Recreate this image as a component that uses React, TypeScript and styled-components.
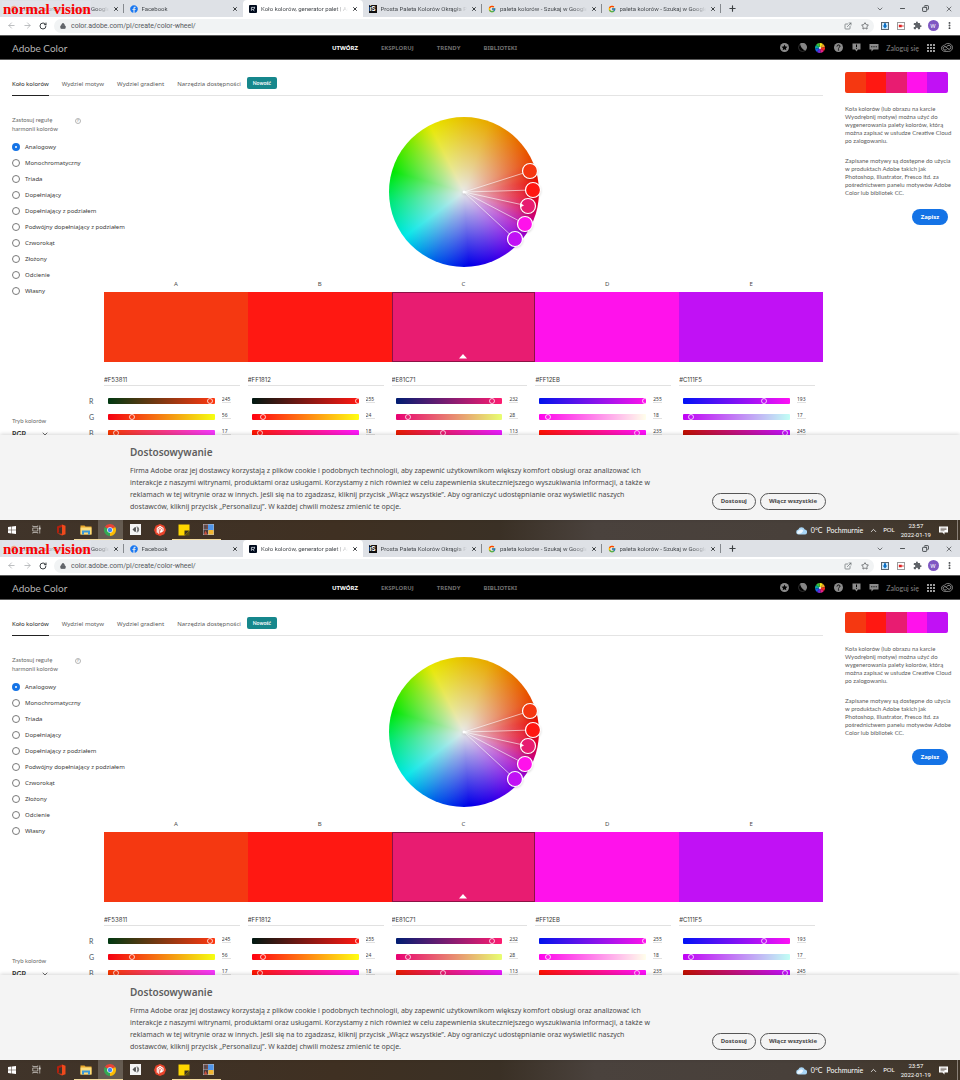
import React, { useState } from 'react';
import styled, { createGlobalStyle, css } from 'styled-components';
import {
  ArrowLeft, ArrowRight, RotateCw, Lock, ExternalLink, Star, MoreVertical, X, Plus, Minus, Copy, ChevronDown, ChevronUp,
} from 'lucide-react';
import { FcGoogle } from 'react-icons/fc';
import { FaFacebook } from 'react-icons/fa';
import { MdExtension } from 'react-icons/md';

const GlobalStyle = createGlobalStyle`
  *, *::before, *::after { box-sizing: border-box; }
  body { margin: 0; background: #fff; }
  button, input, select { font: inherit; color: inherit; margin: 0; padding: 0; border: 0; background: none; }
  ul, p, h1, h2, fieldset, legend { margin: 0; padding: 0; border: 0; }
  ul { list-style: none; }
  a { color: inherit; text-decoration: none; }
`;

const adobe = '"Noto Sans", "Open Sans", sans-serif';
const adobeSmall = 'Lato, "Open Sans", sans-serif';
const system = 'Roboto, "Open Sans", sans-serif';

/* ---------- data ---------- */

type Rgb = [number, number, number];
const palette: { name: string; hex: string; rgb: Rgb }[] = [
  { name: 'A', hex: '#F53811', rgb: [245, 56, 17] },
  { name: 'B', hex: '#FF1812', rgb: [255, 24, 18] },
  { name: 'C', hex: '#E81C71', rgb: [232, 28, 113] },
  { name: 'D', hex: '#FF12EB', rgb: [255, 18, 235] },
  { name: 'E', hex: '#C111F5', rgb: [193, 17, 245] },
];
const channels = ['R', 'G', 'B'];
const rules = [
  'Analogowy', 'Monochromatyczny', 'Triada', 'Dopełniający', 'Dopełniający z podziałem',
  'Podwójny dopełniający z podziałem', 'Czworokąt', 'Złożony', 'Odcienie', 'Własny',
];
const handles = [
  { x: 141, y: 54 }, { x: 144, y: 73 }, { x: 139, y: 89 }, { x: 136, y: 107 }, { x: 126, y: 122 },
];

const rampOf = (rgb: Rgb, channel: number) => {
  const end = (v: number) => `rgb(${rgb.map((c, i) => (i === channel ? v : c)).join(',')})`;
  return `linear-gradient(to right, ${end(0)}, ${end(255)})`;
};

/* ---------- screen and browser frame ---------- */

const Screen = styled.section`
  position: relative;
  display: flex;
  flex-direction: column;
  height: 50vh;
  overflow: hidden;
  font: 6px/8px ${adobe};
  color: #4b4b4b;
`;

const VisionLabel = styled.strong`
  position: absolute;
  top: 1px;
  left: 2px;
  padding-left: 1px;
  font: bold 15px/16px "Liberation Serif", serif;
  color: #fa0000;
  background: rgba(226, 228, 236, 0.6);
`;

const TabStrip = styled.div`
  display: flex;
  height: 17px;
  background: #dee1e6;
  font: 6px/17px ${system};
  color: #45494d;
`;

const TabList = styled.div`
  display: flex;
  flex: 0 1 721px;
  padding-left: 4px;
  min-width: 0;
`;

const BrowserTab = styled.div<{ $active?: boolean; $divider?: boolean }>`
  display: flex;
  flex: 1;
  align-items: center;
  gap: 4px;
  min-width: 0;
  padding: 0 5px 0 6px;
  border-radius: 4px 4px 0 0;
  background: ${(p) => (p.$active ? '#fff' : 'transparent')};
  background-image: ${(p) => (p.$divider ? 'linear-gradient(#85898e, #85898e)' : 'none')};
  background-repeat: no-repeat;
  background-position: right center;
  background-size: 1px 9px;
`;

const TabTitle = styled.span`
  flex: 1;
  min-width: 0;
  overflow: hidden;
  white-space: nowrap;
  mask-image: linear-gradient(to right, #000 85%, transparent);
`;

const IconButton = styled.button<{ $w?: number; $tint?: string }>`
  display: flex;
  flex: none;
  align-items: center;
  justify-content: center;
  width: ${(p) => (p.$w ? `${p.$w}px` : 'auto')};
  color: ${(p) => p.$tint ?? '#3c4043'};
`;

const WindowControls = styled.div`
  display: flex;
  margin-left: auto;
`;

const SiteMark = styled.span`
  flex: none;
  width: 8px;
  height: 8px;
  background: #111;
  color: #fff;
  font: bold 7px/8px ${system};
  text-align: center;
`;

const Toolbar = styled.div`
  display: flex;
  align-items: center;
  height: 19px;
  padding: 0 3px 1px;
  border-bottom: 1px solid #5a5a5a;
  background: #fff;
`;

const Omnibox = styled.label`
  display: flex;
  flex: 1;
  align-items: center;
  gap: 5px;
  height: 14px;
  margin: 0 3px;
  padding-left: 6px;
  border-radius: 7px;
  background: #f1f3f4;
`;

const OmniboxActions = styled.span`
  display: flex;
`;

const Address = styled.input`
  flex: 1;
  min-width: 0;
  font: 7px/14px ${system};
  color: #55595d;
  outline: none;
`;

const Avatar = styled.span`
  width: 11px;
  height: 11px;
  border-radius: 50%;
  background: #7e57c2;
  color: #fff;
  font: 6px/11px ${system};
  text-align: center;
`;

/* ---------- site header ---------- */

const SiteHeader = styled.header`
  display: flex;
  align-items: center;
  height: 24px;
  padding: 0 5px 0 12px;
  border-bottom: 1px solid #5a5a5a;
  background: #000;
  font-family: ${adobeSmall};
`;

const Brand = styled.a`
  flex: 0 0 320px;
  font-size: 10px;
  line-height: 12px;
  color: #b4b4b4;
`;

const Nav = styled.nav`
  display: flex;
  gap: 23px;
`;

const NavLink = styled.a<{ $current?: boolean }>`
  font-size: 6px;
  line-height: 10px;
  font-family: ${adobe};
  font-weight: 700;
  color: ${(p) => (p.$current ? '#fff' : '#6e6e6e')};
`;

const HeaderTools = styled.div`
  display: flex;
  align-items: center;
  margin-left: auto;
`;

const LoginLink = styled.a`
  margin: 0 4px 0 3px;
  font-size: 7px;
  line-height: 10px;
  color: #858585;
`;

/* ---------- page ---------- */

const Viewport = styled.main`
  display: flex;
  flex: 1 1 0;
  gap: 22px;
  min-height: 0;
  padding: 0 12px;
  overflow: hidden;
`;

const Workspace = styled.div`
  flex: 1;
  min-width: 0;
`;

const PageTabs = styled.nav`
  display: flex;
  align-items: flex-end;
  gap: 13px;
  height: 36px;
  border-bottom: 1px solid #e4e4e4;
`;

const PageTab = styled.a<{ $current?: boolean }>`
  height: 24px;
  margin-bottom: -1px;
  border-bottom: 1px solid ${(p) => (p.$current ? '#222' : 'transparent')};
  line-height: 24px;
  white-space: nowrap;
  color: ${(p) => (p.$current ? '#222' : '#5c5c5c')};
`;

const Badge = styled.span`
  margin: 0 0 6px -7px;
  width: 30px;
  border-radius: 2px;
  background: #16878c;
  color: #fff;
  font: bold 5px/12px ${adobeSmall};
  text-align: center;
`;

const Columns = styled.div`
  display: grid;
  grid-template-columns: 92px 1fr;
`;

const Controls = styled.aside`
  display: flex;
  flex-direction: column;
  padding-top: 19px;
`;

const RuleGroup = styled.fieldset`
  min-width: 0;
  white-space: nowrap;
`;

const RuleHeading = styled.legend`
  display: flex;
  gap: 17px;
  width: 100%;
  height: 24px;
  font: 6px/9px ${adobeSmall};
  color: #6b6b6b;
`;

const HelpMark = styled.span`
  width: 6px;
  height: 6px;
  margin-top: 3px;
  border: 1px solid #b5b5b5;
  border-radius: 50%;
  font: 4px/4px ${adobe};
  text-align: center;
`;

const RuleOption = styled.label`
  display: flex;
  align-items: center;
  gap: 5px;
  height: 16px;
  line-height: 16px;
  color: #3a3a3a;
`;

const RuleRadio = styled.input`
  appearance: none;
  flex: none;
  width: 8px;
  height: 8px;
  border: 1px solid #7a7a7a;
  border-radius: 50%;
  &:checked {
    border: 3px solid #1473e6;
    background: #fff;
  }
`;

const ModeBlock = styled.div`
  display: grid;
  grid-template-columns: 1fr 15px;
  margin-top: 94px;
`;

const ModeField = styled.label`
  padding-top: 23px;
  font: 6px/9px ${adobeSmall};
  color: #6b6b6b;
`;

const ModeSelectRow = styled.span`
  display: flex;
  align-items: center;
  margin-top: 4px;
`;

const ModeSelect = styled.select`
  appearance: none;
  width: 29px;
  font: bold 7px/10px ${adobeSmall};
  color: #333;
`;

const ChannelNames = styled.div`
  font: 7px/16px ${adobeSmall};
  color: #4b5560;
`;

const ChannelName = styled.div``;

const Stage = styled.div`
  display: flex;
  flex-direction: column;
  align-items: stretch;
  min-width: 0;
  padding-top: 21px;
`;

const Wheel = styled.div`
  align-self: center;
  width: 150px;
  height: 150px;
  border-radius: 50%;
  background:
    radial-gradient(circle closest-side, rgba(232, 232, 232, 1), rgba(232, 232, 232, 0.62) 34%, rgba(232, 232, 232, 0.3) 66%, rgba(232, 232, 232, 0) 98%),
    conic-gradient(
      #e8c000 0deg, #e8a800 20deg, #e87000 45deg, #e84600 65deg, #e80a00 82deg, #e60020 95deg,
      #d4006a 108deg, #a800c8 122deg, #7000e8 138deg, #3000e8 157deg, #0000e8 176deg,
      #0060e8 203deg, #00e8e8 233deg, #00e87c 262deg, #00e800 286deg, #78e800 312deg, #e8e800 333deg, #e8c000 360deg
    );
`;

const HandleLayer = styled.svg`
  display: block;
  overflow: visible;
  filter: drop-shadow(0 1px 1px rgba(0, 0, 0, 0.15));
`;

const Swatches = styled.div`
  display: grid;
  grid-template-columns: repeat(5, 1fr);
  margin-top: 12px;
`;

const SwatchItem = styled.div`
  display: flex;
  flex-direction: column;
  text-align: center;
  line-height: 10px;
`;

const Swatch = styled.button<{ $fill: string; $selected?: boolean }>`
  display: flex;
  align-items: flex-end;
  justify-content: center;
  height: 70px;
  margin-top: 3px;
  padding-bottom: 2px;
  background: ${(p) => p.$fill};
  ${(p) => p.$selected && css`border: 1px solid #8c1145;`}
`;

const ColorColumns = styled.div`
  display: grid;
  grid-template-columns: repeat(5, 1fr);
  margin-top: 12px;
`;

const ColorColumn = styled.div`
  min-width: 0;
`;

const HexInput = styled.input`
  display: block;
  width: calc(100% - 8px);
  height: 12px;
  padding-bottom: 1px;
  margin-bottom: 7px;
  border-bottom: 1px solid #e1e1e1;
  font: 6px/10px Inter, sans-serif;
  color: #3a3a3a;
`;

const ChannelRow = styled.div`
  display: grid;
  grid-template-columns: 1fr 9px;
  column-gap: 7px;
  height: 16px;
  padding: 2px 17px 0 4px;
`;

const Track = styled.div<{ $ramp: string }>`
  display: flex;
  height: 6px;
  margin-top: 3px;
  border-radius: 1px;
  background: ${(p) => p.$ramp};
`;

const Range = styled.input`
  appearance: none;
  flex: none;
  width: calc(100% + 4px);
  height: 6px;
  margin: 0 -2px;
  &::-webkit-slider-thumb {
    appearance: none;
    width: 6px;
    height: 6px;
    border: 1px solid rgba(255, 255, 255, 0.75);
    border-radius: 50%;
    background: transparent;
  }
`;

const ValueInput = styled.input`
  width: 100%;
  height: 8px;
  border-bottom: 1px solid #e1e1e1;
  font: 5px/7px ${adobe};
  color: #3a3a3a;
`;

/* ---------- sidebar ---------- */

const Sidebar = styled.aside`
  display: flex;
  flex: 0 0 103px;
  flex-direction: column;
  gap: 12px;
  min-width: 0;
  padding-top: 12px;
`;

const ThemePreview = styled.div`
  display: flex;
  flex: none;
  height: 21px;
  border-radius: 2px;
  overflow: hidden;
`;

const PreviewColor = styled.div<{ $fill: string }>`
  flex: 1;
  background: ${(p) => p.$fill};
`;

const SidebarText = styled.p`
  font: 6px/8px ${adobeSmall};
  color: #5c5c5c;
  white-space: pre;
`;

const SaveButton = styled.button`
  align-self: flex-end;
  width: 36px;
  height: 16px;
  border-radius: 8px;
  background: #1473e6;
  color: #fff;
  font-weight: 700;
`;

/* ---------- cookie banner ---------- */

const CookieBanner = styled.section`
  position: relative;
  display: flex;
  align-items: flex-end;
  justify-content: space-between;
  padding: 10px 134px 7px 130px;
  background: #f4f4f4;
  box-shadow: 0 -1px 4px rgba(0, 0, 0, 0.16);
`;

const CookieTitle = styled.h2`
  margin-bottom: 6px;
  font: 600 10px/14px ${adobe};
  color: #5e5e5e;
`;

const CookieText = styled.p`
  font-size: 7px;
  line-height: 12px;
  color: #4b4b4b;
  white-space: pre;
`;

const CookieActions = styled.div`
  display: flex;
  gap: 4px;
  margin-bottom: 3px;
`;

const OutlineButton = styled.button`
  height: 17px;
  padding: 0 8px;
  border: 1px solid #555;
  border-radius: 9px;
  font: bold 6px/15px ${adobe};
  white-space: nowrap;
  color: #4b4b4b;
`;

/* ---------- taskbar ---------- */

const Taskbar = styled.footer`
  display: flex;
  flex: none;
  height: 20px;
  background: linear-gradient(to right, #40342a, #3f3022 35%, #3a3025 52%, #4a423d 62%, #48403a 82%, #3f3427);
  color: #fff;
  font: 7px/20px ${adobeSmall};
`;

const TaskbarApps = styled.div`
  display: grid;
  grid-template-columns: repeat(9, 1fr);
  flex: 0 0 221px;
`;

const TaskbarApp = styled.button<{ $running?: boolean; $focused?: boolean }>`
  display: flex;
  align-items: center;
  justify-content: center;
  border-bottom: 1px solid ${(p) => (p.$running ? '#f3dba0' : 'transparent')};
  background: ${(p) => (p.$focused ? '#665c52' : 'none')};
`;

const Tray = styled.div`
  display: flex;
  align-items: center;
  margin-left: auto;
`;

const Weather = styled.button`
  display: flex;
  align-items: center;
  gap: 4px;
  margin-right: 6px;
`;

const Language = styled.span`
  margin: 0 6px 0 5px;
  font: 6px/20px ${adobeSmall};
`;

const Clock = styled.time`
  font: 6px/9px ${system};
  text-align: center;
  margin-right: 8px;
`;

const ShowDesktop = styled.span`
  width: 3px;
  height: 20px;
  margin-left: 9px;
  border-left: 1px solid #8a8178;
`;

/* ---------- drawings ---------- */

const AdobeTabIcon = () => (
  <svg width="8" height="8" viewBox="0 0 8 8">
    <rect width="8" height="8" rx="1" fill="#000b1d" />
    <path d="M2.4 5.8V2.4h2a1 1 0 0 1 0 2h-1l2 1.5M5.6 1.8v1.4" fill="none" stroke="#dfe6ee" strokeWidth=".8" />
  </svg>
);

const DownloadExt = () => (
  <svg width="8" height="8" viewBox="0 0 8 8">
    <rect x=".5" y=".5" width="7" height="7" fill="#cfe9fb" stroke="#5c6770" />
    <path d="M3 1.2h2v2.4h1.4L4 6.4 1.6 3.6H3z" fill="#0a6fc4" />
  </svg>
);

const VideoExt = () => (
  <svg width="8" height="8" viewBox="0 0 8 8">
    <rect x=".5" y=".5" width="7" height="7" fill="#fff" stroke="#9a9a9a" />
    <path d="M1.8 2.8h3v2.4h-3zM4.8 4l1.6-1.1v2.2z" fill="#e02020" />
  </svg>
);

const StarDisc = () => (
  <svg width="9" height="9" viewBox="0 0 18 18">
    <circle cx="9" cy="9" r="9" fill="#8c8c8c" />
    <path d="M9 3l1.8 3.9 4.2.5-3.1 2.9.8 4.2L9 12.4l-3.7 2.1.8-4.2L3 7.4l4.2-.5z" fill="#000" />
  </svg>
);

const ContrastMoon = () => (
  <svg width="9" height="9" viewBox="0 0 18 18">
    <circle cx="9" cy="9" r="8" fill="none" stroke="#3c3c3c" strokeWidth="1.5" />
    <path d="M4 1.500A8.500 8.500 0 1 1 14.500 15.500C9 13 5 8 4 1.500z" fill="#858585" />
  </svg>
);

const wheelSlices = ['#f5a623', '#f2e51d', '#3cc13b', '#0aa89a', '#1463e6', '#6a2ad8', '#e0218a', '#ef2c1f'];
const ColorDisc = () => (
  <svg width="10" height="10" viewBox="-10 -10 20 20">
    {wheelSlices.map((fill, i) => (
      <path key={fill} d="M0 0L-3.83-9.24A10 10 0 0 1 3.83-9.24z" fill={fill} transform={`rotate(${i * -45 + 60})`} />
    ))}
    <circle r="2" fill="#fff" />
  </svg>
);

const HelpDisc = () => (
  <svg width="9" height="9" viewBox="0 0 18 18">
    <circle cx="9" cy="9" r="9" fill="#8c8c8c" />
    <path d="M6 7c0-4 6-4 6-.5 0 2.2-3 2.2-3 4.5" fill="none" stroke="#000" strokeWidth="2" />
    <circle cx="9" cy="13.8" r="1.3" fill="#000" />
  </svg>
);

const AlertBubble = () => (
  <svg width="9" height="9" viewBox="0 0 18 18">
    <path d="M1 1h16v12h-5l-3 4-3-4H1z" fill="#8c8c8c" />
    <path d="M9 3v5M9 9.5v2" stroke="#000" strokeWidth="2" />
  </svg>
);

const ChatBubble = () => (
  <svg width="10" height="9" viewBox="0 0 20 18">
    <path d="M1 2h18v11H9l-4 4v-4H1z" fill="#8c8c8c" />
    <path d="M4.5 7.5h2.2m2.2 0h2.2m2.2 0h2.2" stroke="#000" strokeWidth="2.2" />
  </svg>
);

const AppGrid = () => (
  <svg width="8" height="8" viewBox="0 0 16 16" fill="#9c9c9c">
    {[0, 6, 12].map((y) => [0, 6, 12].map((x) => <rect key={`${x}-${y}`} x={x} y={y} width="4" height="4" />))}
  </svg>
);

const CreativeCloud = () => (
  <svg width="12" height="9" viewBox="0 0 24 18" fill="none" stroke="#a0a0a0">
    <path d="M8 16.8C3.5 16.8 1 14 1 10.5S4 4.5 7 4.5C9 1.5 12 1 14 1c5 0 9 3.5 9 8s-3.5 7.8-7.5 7.8z" strokeWidth="1.6" />
    <path d="M11 13c-1 .8-2 1-3 1-2.2 0-3.700-1.500-3.700-3.500S6 7.200 8 7.200c3.500 0 4.500 5.300 8 5.300 2.200 0 3.700-1.600 3.700-3.700S18 4.800 15.500 4.800c-2 0-3.500 1-4 2.500" strokeWidth="2" />
  </svg>
);

const WindowsLogo = () => (
  <svg width="8" height="8" viewBox="0 0 16 16" fill="#fff">
    <path d="M0 2l7-1v6.6H0zM8 .9L16 0v7.6H8zM0 8.5h7V15l-7-1zM8 8.5h8V16l-8-1z" />
  </svg>
);

const TaskView = () => (
  <svg width="9" height="9" viewBox="0 0 18 18" fill="none" stroke="#d8d4d0" strokeWidth="1.4">
    <path d="M1.5 6h10v6h-10zM1.5 1v2h10V1M1.5 17v-2h10v2M15.5 1v4M15.5 9.5V17" />
    <path d="M14.5 5.5h2v3h-2z" fill="#fff" />
  </svg>
);

const OfficeLogo = () => (
  <svg width="10" height="12" viewBox="0 0 20 24">
    <path d="M12 1l7 2.5v17L12 23z" fill="#ef4a1c" />
    <path d="M12 1v5L6 8v9l-4 1.5V5z" fill="#b3200f" />
    <path d="M2 18.5L12 23v-3.5z" fill="#d63a1a" />
  </svg>
);

const FolderIcon = () => (
  <svg width="12" height="10" viewBox="0 0 24 20">
    <path d="M1 1h8l2 2h12v16H1z" fill="#e9a72b" />
    <path d="M1 5h22v14H1z" fill="#fbdc7c" />
    <path d="M4 19v-8h16v8h-4v-4H8v4z" fill="#3c9ad8" />
  </svg>
);

const ChromeLogo = () => (
  <svg width="12" height="12" viewBox="-12 -12 24 24">
    <path d="M0 0L-10.4-6A12 12 0 0 1 10.4-6z" fill="#ea4335" />
    <path d="M0 0L10.4-6A12 12 0 0 1 0 12z" fill="#fbbc04" />
    <path d="M0 0L0 12A12 12 0 0 1-10.4-6z" fill="#34a853" />
    <circle r="5.6" fill="#fff" />
    <circle r="4.4" fill="#4285f4" />
  </svg>
);

const SpeakerTile = () => (
  <svg width="11" height="11" viewBox="0 0 22 22">
    <rect width="22" height="22" fill="#f4f4f4" />
    <path d="M5 11l5-5v10z" fill="#555" />
    <path d="M11 6.500v9M14 7.500c2 2 2 5 0 7M13.500 5.500c5 1 5 10 0 11" fill="none" stroke="#333" strokeWidth="1.600" />
  </svg>
);

const RedDisc = () => (
  <svg width="12" height="12" viewBox="0 0 24 24">
    <path d="M12 0l8.5 3.5L24 12l-3.5 8.5L12 24l-8.5-3.5L0 12l3.5-8.5z" fill="#e8432a" />
    <path d="M6.5 17.5V8.5L12 5l6 3.5v5L12.5 17M9.5 19.5v-9L12 9l2.800 1.700v2.600L12 14.500" fill="none" stroke="#fff" strokeWidth="2.200" />
  </svg>
);

const NoteIcon = () => (
  <svg width="12" height="12" viewBox="0 0 24 24">
    <path d="M1 1h22v13l-9 9H1z" fill="#ffd800" />
    <path d="M13 23v-10h10z" fill="#3b3221" />
    <path d="M23 13v10H13z" fill="#5c5010" />
  </svg>
);

const CollageIcon = () => (
  <svg width="11" height="11" viewBox="0 0 22 22">
    <rect width="22" height="22" fill="#b9c0c8" />
    <rect x="1" y="1" width="9" height="9" fill="#7d4a44" />
    <rect x="3" y="3" width="4" height="6" fill="#46505a" />
    <rect x="10" y="1" width="11" height="12" fill="#4f95ea" />
    <rect x="11" y="12" width="10" height="9" fill="#f2b632" />
    <rect x="1" y="11" width="9" height="10" fill="#4b3a3a" />
    <path d="M2 21l3-8 4 8z" fill="#c9503c" />
  </svg>
);

const CloudIcon = () => (
  <svg width="11" height="9" viewBox="0 0 22 18">
    <path d="M5 17a5 5 0 0 1-.5-9.9A7 7 0 0 1 17.5 7 5 5 0 0 1 17 17z" fill="#a9d5f5" />
    <path d="M3 15a4 4 0 0 1 3-6c2-3 7-3 8.5.5C12 14 8 16.5 3 15z" fill="#eef8ff" />
  </svg>
);

const NoticeIcon = () => (
  <svg width="9" height="9" viewBox="0 0 18 18">
    <path d="M0 1h18v12h-7v4l-4-4H0z" fill="#fff" />
    <path d="M3 4.5h12M3 7h12M3 9.5h8" stroke="#40362c" strokeWidth="1.1" />
  </svg>
);

/* ---------- parts ---------- */

const browserTabs = [
  { title: 'paleta kolorów - Szukaj w Google', icon: <FcGoogle size={8} />, divider: true },
  { title: 'Facebook', icon: <FaFacebook size={8} color="#1877f2" /> },
  { title: 'Koło kolorów, generator palet | Adobe', icon: <AdobeTabIcon />, active: true },
  { title: 'Prosta Paleta Kolorów Okrągła Pro', icon: <SiteMark>iS</SiteMark>, divider: true },
  { title: 'paleta kolorów - Szukaj w Google', icon: <FcGoogle size={8} />, divider: true },
  { title: 'paleta kolorów - Szukaj w Google', icon: <FcGoogle size={8} />, divider: true },
];

const BrowserFrame = () => (
  <>
    <TabStrip>
      <TabList>
        {browserTabs.map((t, i) => (
          <BrowserTab key={i} $active={t.active} $divider={t.divider}>
            {t.icon}
            <TabTitle>{t.title}</TabTitle>
            <IconButton aria-label="Zamknij kartę"><X size={6} strokeWidth={4} /></IconButton>
          </BrowserTab>
        ))}
      </TabList>
      <IconButton $w={23} aria-label="Nowa karta"><Plus size={9} strokeWidth={3} /></IconButton>
      <WindowControls>
        <IconButton $w={23} aria-label="Karty"><ChevronDown size={8} strokeWidth={2} /></IconButton>
        <IconButton $w={23} aria-label="Minimalizuj"><Minus size={7} strokeWidth={3} /></IconButton>
        <IconButton $w={23} aria-label="Przywróć"><Copy size={7} strokeWidth={3} transform="scale(-1,1)" /></IconButton>
        <IconButton $w={23} aria-label="Zamknij"><X size={8} strokeWidth={2} /></IconButton>
      </WindowControls>
    </TabStrip>
    <Toolbar>
      <IconButton $w={16} $tint="#a8abae" aria-label="Wstecz"><ArrowLeft size={9} /></IconButton>
      <IconButton $w={16} $tint="#a8abae" aria-label="Dalej"><ArrowRight size={9} /></IconButton>
      <IconButton $w={16} aria-label="Odśwież"><RotateCw size={8} strokeWidth={3} /></IconButton>
      <Omnibox>
        <Lock size={6} strokeWidth={3} fill="#5f6368" color="#5f6368" />
        <Address aria-label="Adres" defaultValue="color.adobe.com/pl/create/color-wheel/" />
        <OmniboxActions>
          <IconButton $w={16} $tint="#5f6368" aria-label="Udostępnij"><ExternalLink size={8} /></IconButton>
          <IconButton $w={18} aria-label="Zakładka"><Star size={8} /></IconButton>
        </OmniboxActions>
      </Omnibox>
      <IconButton $w={16} aria-label="Pobieranie"><DownloadExt /></IconButton>
      <IconButton $w={16} aria-label="Wideo"><VideoExt /></IconButton>
      <IconButton $w={16} $tint="#5f6368" aria-label="Rozszerzenia"><MdExtension size={9} /></IconButton>
      <IconButton $w={16} aria-label="Profil"><Avatar>W</Avatar></IconButton>
      <IconButton $w={16} aria-label="Menu"><MoreVertical size={9} strokeWidth={3} /></IconButton>
    </Toolbar>
  </>
);

const Header = () => (
  <SiteHeader>
    <Brand href="#">Adobe Color</Brand>
    <Nav>
      <NavLink href="#" $current>UTWÓRZ</NavLink>
      <NavLink href="#">EKSPLORUJ</NavLink>
      <NavLink href="#">TRENDY</NavLink>
      <NavLink href="#">BIBLIOTEKI</NavLink>
    </Nav>
    <HeaderTools>
      <IconButton $w={18} aria-label="Wyróżnione"><StarDisc /></IconButton>
      <IconButton $w={18} aria-label="Motyw"><ContrastMoon /></IconButton>
      <IconButton $w={18} aria-label="Koło"><ColorDisc /></IconButton>
      <IconButton $w={18} aria-label="Pomoc"><HelpDisc /></IconButton>
      <IconButton $w={18} aria-label="Zgłoś"><AlertBubble /></IconButton>
      <IconButton $w={18} aria-label="Czat"><ChatBubble /></IconButton>
      <LoginLink href="#">Zaloguj się</LoginLink>
      <IconButton $w={16} aria-label="Aplikacje"><AppGrid /></IconButton>
      <IconButton $w={16} aria-label="Creative Cloud"><CreativeCloud /></IconButton>
    </HeaderTools>
  </SiteHeader>
);

const RulesPanel = ({ id }: { id: string }) => {
  const [rule, setRule] = useState(rules[0]);
  return (
    <Controls>
      <RuleGroup>
        <RuleHeading>
          <span>Zastosuj regułę<br />harmonii kolorów</span>
          <HelpMark>?</HelpMark>
        </RuleHeading>
        {rules.map((r) => (
          <RuleOption key={r}>
            <RuleRadio type="radio" name={`rule-${id}`} checked={rule === r} onChange={() => setRule(r)} />
            {r}
          </RuleOption>
        ))}
      </RuleGroup>
      <ModeBlock>
        <ModeField>
          Tryb kolorów
          <ModeSelectRow>
            <ModeSelect defaultValue="RGB"><option>RGB</option></ModeSelect>
            <ChevronDown size={8} strokeWidth={3} />
          </ModeSelectRow>
        </ModeField>
        <ChannelNames>
          {channels.map((c) => <ChannelName key={c}>{c}</ChannelName>)}
        </ChannelNames>
      </ModeBlock>
    </Controls>
  );
};

const ColorStage = () => (
  <Stage>
    <Wheel>
      <HandleLayer width="150" height="150" viewBox="0 0 150 150">
        {handles.map((h) => (
          <line key={h.y} x1="75" y1="75" x2={h.x} y2={h.y} stroke="#fff" strokeOpacity=".6" />
        ))}
        {handles.map((h, i) => (
          <circle key={h.y} cx={h.x} cy={h.y} r="7.5" fill={palette[i].hex} stroke="#fff" strokeWidth="1.2" />
        ))}
        <path d="M131.5 86l3.5 2.4-3.5 1.8z" fill="#fff" />
        <circle cx="75" cy="75" r="1.5" fill="#fff" />
      </HandleLayer>
    </Wheel>
    <Swatches>
      {palette.map((c) => (
        <SwatchItem key={c.name}>
          {c.name}
          <Swatch $fill={c.hex} $selected={c.name === 'C'} aria-label={`Kolor ${c.name}`}>
            {c.name === 'C' && (
              <svg width="8" height="5" viewBox="0 0 8 5"><path d="M4 0l4 4.5H0z" fill="#fff" /></svg>
            )}
          </Swatch>
        </SwatchItem>
      ))}
    </Swatches>
    <ColorColumns>
      {palette.map((c) => (
        <ColorColumn key={c.name}>
          <HexInput aria-label={`Kod ${c.name}`} defaultValue={c.hex} />
          {channels.map((ch, i) => (
            <ChannelRow key={ch}>
              <Track $ramp={rampOf(c.rgb, i)}>
                <Range type="range" min={0} max={255} defaultValue={c.rgb[i]} aria-label={`${c.name} ${ch}`} />
              </Track>
              <ValueInput aria-label={`${c.name} ${ch} wartość`} defaultValue={c.rgb[i]} />
            </ChannelRow>
          ))}
        </ColorColumn>
      ))}
    </ColorColumns>
  </Stage>
);

const ThemeSidebar = () => (
  <Sidebar>
    <ThemePreview>
      {palette.map((c) => <PreviewColor key={c.name} $fill={c.hex} />)}
    </ThemePreview>
    <SidebarText>
      {'Koła kolorów (lub obrazu na karcie\nWyodrębnij motyw) można użyć do\nwygenerowania palety kolorów, którą\nmożna zapisać w usłudze Creative Cloud\npo zalogowaniu.'}
    </SidebarText>
    <SidebarText>
      {'Zapisane motywy są dostępne do użycia\nw produktach Adobe takich jak\nPhotoshop, Illustrator, Fresco itd. za\npośrednictwem panelu motywów Adobe\nColor lub bibliotek CC.'}
    </SidebarText>
    <SaveButton>Zapisz</SaveButton>
  </Sidebar>
);

const Cookies = () => (
  <CookieBanner>
    <div>
      <CookieTitle>Dostosowywanie</CookieTitle>
      <CookieText>
        {'Firma Adobe oraz jej dostawcy korzystają z plików cookie i podobnych technologii, aby zapewnić użytkownikom większy komfort obsługi oraz analizować ich\ninterakcje z naszymi witrynami, produktami oraz usługami. Korzystamy z nich również w celu zapewnienia skuteczniejszego wyszukiwania informacji, a także w\nreklamach w tej witrynie oraz w innych. Jeśli się na to zgadzasz, kliknij przycisk „Włącz wszystkie”. Aby ograniczyć udostępnianie oraz wyświetlić naszych\ndostawców, kliknij przycisk „Personalizuj”. W każdej chwili możesz zmienić te opcje.'}
      </CookieText>
    </div>
    <CookieActions>
      <OutlineButton>Dostosuj</OutlineButton>
      <OutlineButton>Włącz wszystkie</OutlineButton>
    </CookieActions>
  </CookieBanner>
);

const apps = [
  { name: 'Start', icon: <WindowsLogo /> },
  { name: 'Widok zadań', icon: <TaskView /> },
  { name: 'Office', icon: <OfficeLogo /> },
  { name: 'Eksplorator', icon: <FolderIcon />, running: true },
  { name: 'Chrome', icon: <ChromeLogo />, running: true, focused: true },
  { name: 'Dźwięk', icon: <SpeakerTile /> },
  { name: 'Edytor', icon: <RedDisc /> },
  { name: 'Notatki', icon: <NoteIcon />, running: true },
  { name: 'Kolaż', icon: <CollageIcon />, running: true },
];

const WindowsTaskbar = () => (
  <Taskbar>
    <TaskbarApps>
      {apps.map((a) => (
        <TaskbarApp key={a.name} aria-label={a.name} $running={a.running} $focused={a.focused}>{a.icon}</TaskbarApp>
      ))}
    </TaskbarApps>
    <Tray>
      <Weather><CloudIcon /><span>0°C</span><span>Pochmurnie</span></Weather>
      <ChevronUp size={9} />
      <Language>POL</Language>
      <Clock>23:57<br />2022-01-19</Clock>
      <NoticeIcon />
      <ShowDesktop />
    </Tray>
  </Taskbar>
);

const DesktopScreen = ({ id }: { id: string }) => (
  <Screen>
    <BrowserFrame />
    <Header />
    <Viewport>
      <Workspace>
        <PageTabs>
          <PageTab href="#" $current>Koło kolorów</PageTab>
          <PageTab href="#">Wydziel motyw</PageTab>
          <PageTab href="#">Wydziel gradient</PageTab>
          <PageTab href="#">Narzędzia dostępności</PageTab>
          <Badge>Nowość</Badge>
        </PageTabs>
        <Columns>
          <RulesPanel id={id} />
          <ColorStage />
        </Columns>
      </Workspace>
      <ThemeSidebar />
    </Viewport>
    <Cookies />
    <WindowsTaskbar />
    <VisionLabel>normal vision</VisionLabel>
  </Screen>
);

export default function App() {
  return (
    <>
      <GlobalStyle />
      <DesktopScreen id="top" />
      <DesktopScreen id="bottom" />
    </>
  );
}
